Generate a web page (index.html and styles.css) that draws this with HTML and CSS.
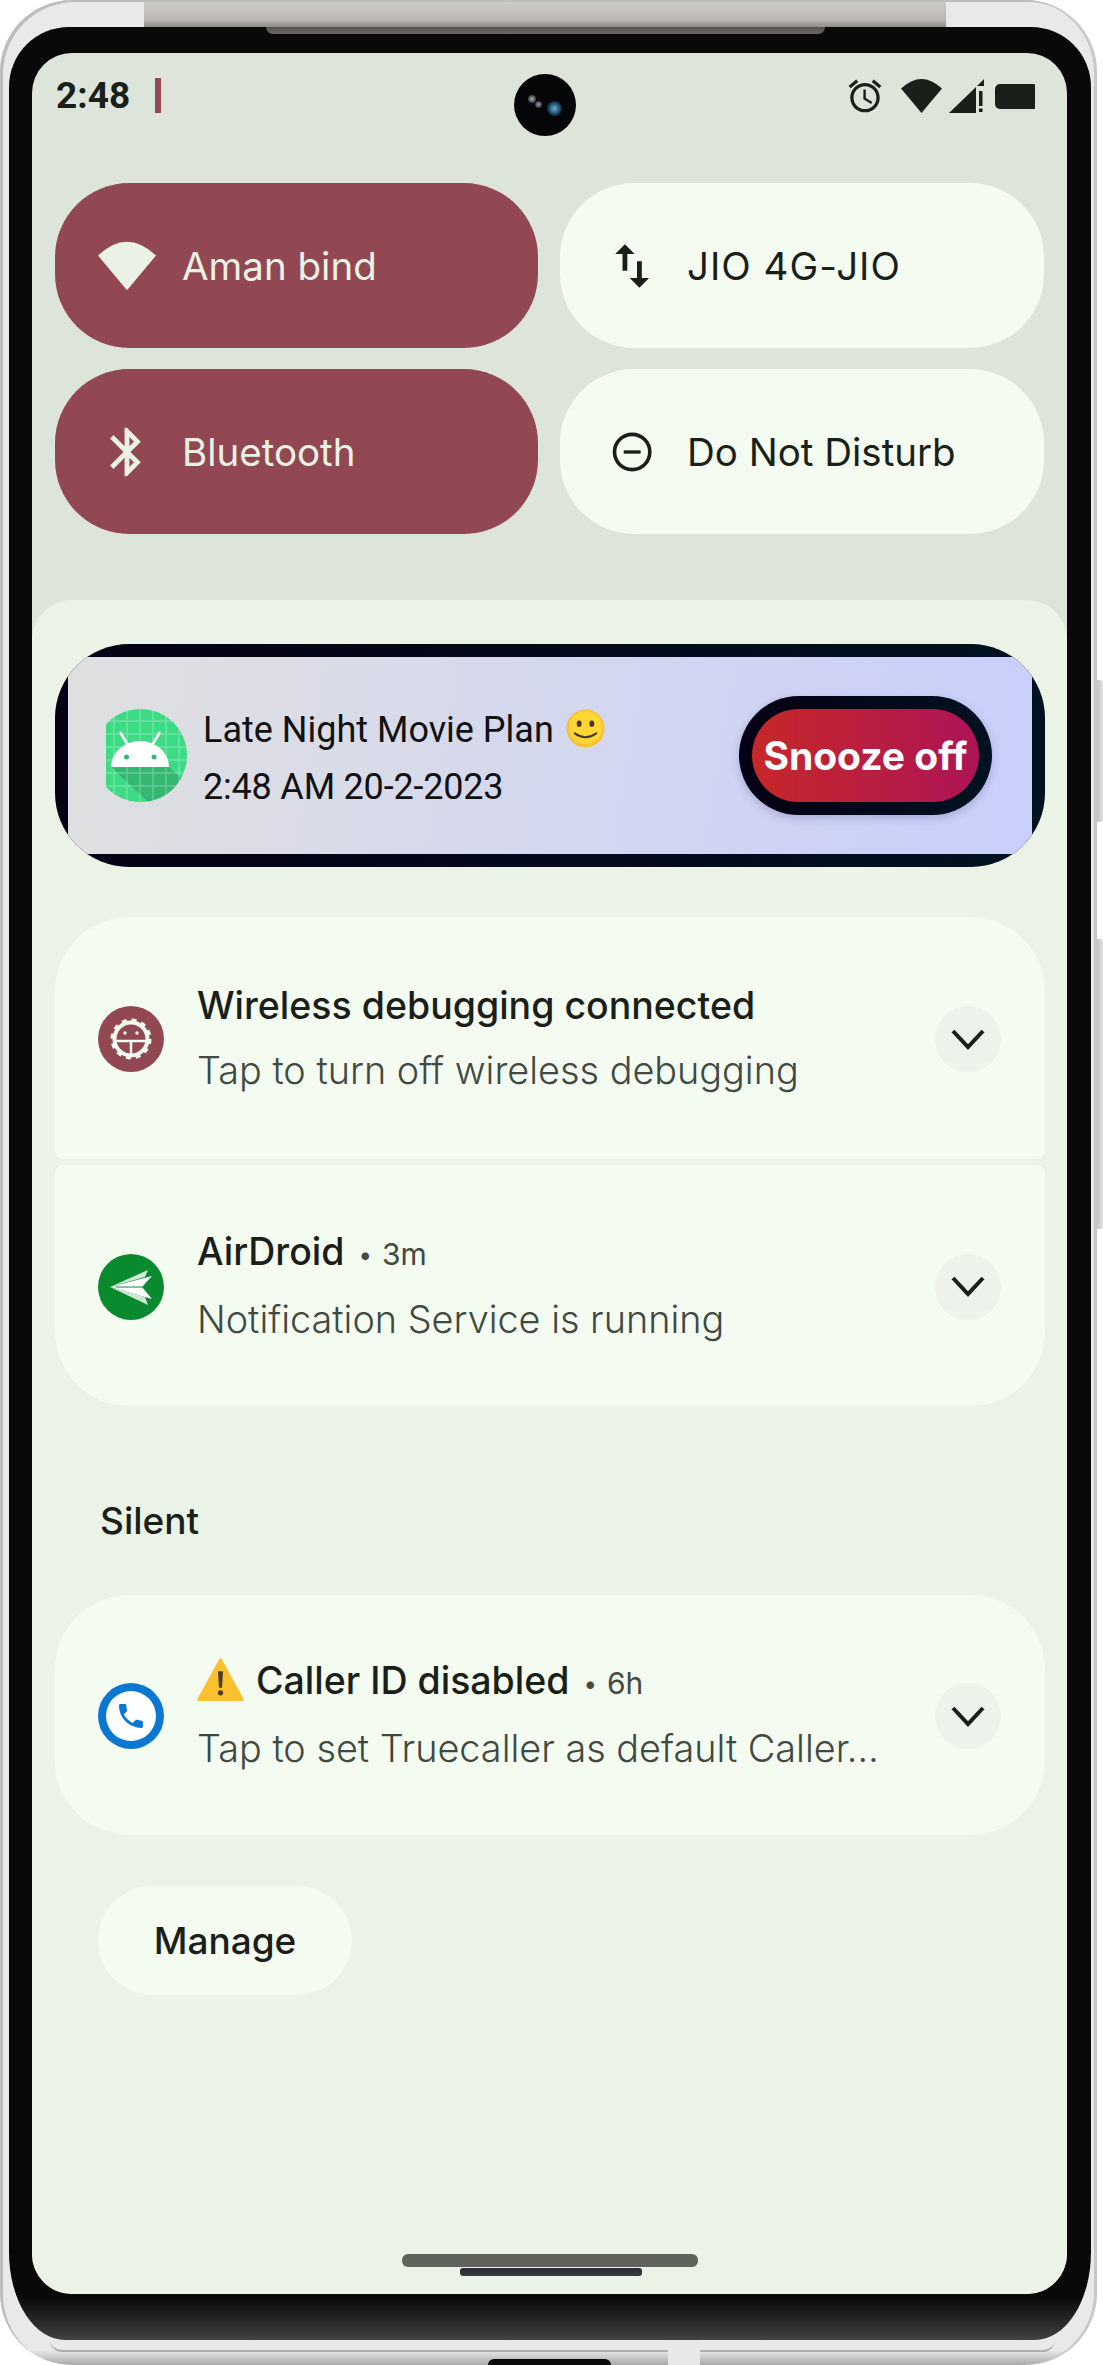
FILE: index.html
```html
<!DOCTYPE html>
<html lang="en">
<head>
  <meta charset="UTF-8" />
  <meta name="viewport" content="width=device-width, initial-scale=1.0"/>
  <title>Notification shade</title>
  <link rel="stylesheet" href="styles.css">
</head>
<body>

  <div class="phone">
    <!-- frame parts that sit over the body -->
    <div class="top-bar"></div>
    <div class="top-strip"></div>
    <div class="side-btn side-btn-power"></div>
    <div class="side-btn side-btn-volume"></div>
    <div class="bottom-line"></div>
    <div class="bottom-seam"></div>
    <div class="bottom-port"></div>

    <div class="bezel">
      <div class="screen">
        <div class="camera"><span class="lens-a"></span><span class="lens-b"></span><span class="lens-c"></span></div>

        <div class="status-bar">
          <div class="status-left">
            <span class="clock">2:48</span>
            <span class="status-mark"></span>
          </div>
          <div class="status-icons">
            <svg class="ic-alarm" viewBox="1 1 22 22"><path d="M22 5.72l-4.6-3.86-1.29 1.53 4.6 3.86L22 5.72zM7.88 3.39L6.6 1.86 2 5.71l1.29 1.53 4.59-3.85zM12.5 8H11v6l4.75 2.85.75-1.23-4-2.37V8zM12 4c-4.97 0-9 4.03-9 9s4.03 9 9 9 9-4.03 9-9-4.03-9-9-9zm0 16c-3.87 0-7-3.13-7-7s3.13-7 7-7 7 3.13 7 7-3.13 7-7 7z"/></svg>
            <svg class="ic-wifi" viewBox="0 0 41 34"><path d="M0 9.5Q20.500-9.500 41 9.500L20.500 34z"/></svg>
            <svg class="ic-signal" viewBox="0 0 35 34"><path d="M0 34L27 8V34zM28 7L35 0V7zM30 12H33.500V27H30zM30 29.500H33.500V33H30z"/></svg>
            <div class="battery"></div>
          </div>
        </div>

        <div class="tiles">
          <div class="tile tile-on">
            <svg class="tile-ic ic-tile-wifi" viewBox="0 0 55 46"><path d="M0 13Q27.500-13 55 13L27.500 46z"/></svg>
            <span>Aman bind</span>
          </div>
          <div class="tile">
            <svg class="tile-ic" viewBox="2 0 24 24"><path d="M16 17.010V10h-2v7.010h-3L15 21l4-3.990h-3zM9 3L5 6.990h3V14h2V6.990h3L9 3z"/></svg>
            <span class="tile-wide">JIO 4G-JIO</span>
          </div>
          <div class="tile tile-on">
            <svg class="tile-ic" viewBox="0 0 24 24"><path d="M17.710 7.710L12 2h-1v7.590L6.410 5 5 6.410 10.590 12 5 17.590 6.410 19 11 14.410V22h1l5.710-5.710-4.300-4.290 4.300-4.290zM13 5.830l1.880 1.880L13 9.590V5.830zm1.880 10.460L13 18.170v-3.760l1.880 1.880z"/></svg>
            <span>Bluetooth</span>
          </div>
          <div class="tile">
            <svg class="tile-ic" viewBox="0 0 24 24"><circle class="dnd-ring" cx="10" cy="12" r="7.300"/><rect x="6.500" y="11.300" width="7" height="1.400"/></svg>
            <span>Do Not Disturb</span>
          </div>
        </div>

        <div class="panel">
          <div class="alarm-card">
            <div class="alarm-inner">
              <svg class="alarm-app" viewBox="0 0 81 93">
                <defs>
                  <clipPath id="appClip"><circle cx="34.500" cy="46.500" r="46.500"/></clipPath>
                </defs>
                <g clip-path="url(#appClip)">
                  <rect width="81" height="93" fill="#3ddb85"/>
                  <path d="M5 58H63L81 74V93H42z" fill="#33b772"/>
                  <path class="app-grid" d="M8 0V93M21 0V93M34 0V93M47 0V93M60 0V93M73 0V93M0 12H81M0 25H81M0 38H81M0 51H81M0 64H81M0 77H81"/>
                  <path class="app-antenna" d="M14 23L23 38M54 23L45 38"/>
                  <path d="M5 58A29 26 0 0 1 63 58z" fill="#fff"/>
                  <circle cx="20.500" cy="48" r="2.500" fill="#33b772"/>
                  <circle cx="48" cy="48" r="2.500" fill="#33b772"/>
                </g>
              </svg>
              <div class="alarm-text">
                <div class="alarm-title">Late Night Movie Plan
                  <svg class="smiley" viewBox="0 0 40 40"><circle cx="20" cy="20" r="19.500" fill="#fbc02d"/><circle cx="20" cy="19" r="17" fill="#fdd835"/><ellipse cx="13.500" cy="15" rx="2.500" ry="3.300" fill="#4e342e"/><ellipse cx="26.500" cy="15" rx="2.500" ry="3.300" fill="#4e342e"/><path d="M9 25Q20 33 31 25" fill="none" stroke="#4e342e" stroke-width="2.200" stroke-linecap="round"/></svg>
                </div>
                <div class="alarm-time">2:48 AM 20-2-2023</div>
              </div>
              <div class="snooze"><div class="snooze-face">Snooze off</div></div>
            </div>
          </div>

          <div class="notif-group">
            <div class="notif notif-first">
              <svg class="notif-ic" viewBox="0 0 66 66">
                <circle cx="33" cy="33" r="33" fill="#924852"/>
                <circle class="gear-teeth" cx="33" cy="33" r="18.500"/>
                <circle class="gear-ring" cx="33" cy="33" r="16.500"/>
                <path class="gear-t" d="M17 35H49M33 35V50"/>
                <circle cx="27" cy="27" r="1.700" fill="#f3faf0"/>
                <circle cx="39" cy="27" r="1.700" fill="#f3faf0"/>
              </svg>
              <div class="notif-text">
                <div class="notif-title">Wireless debugging connected</div>
                <div class="notif-sub">Tap to turn off wireless debugging</div>
              </div>
              <div class="expand"><svg viewBox="0 0 34 21"><path d="M2 2L17 18L32 2"/></svg></div>
            </div>
            <div class="notif notif-last">
              <svg class="notif-ic" viewBox="0 0 66 66">
                <circle cx="33" cy="33" r="33" fill="#0a8a2e"/>
                <path d="M12 33L54 22L44 33L54 45z" fill="#fff"/>
                <path d="M12 33L50 16L47 23z" fill="#cfe9d4"/>
                <path d="M12 33L50 51L47 43z" fill="#cfe9d4"/>
                <path d="M18 33H44" stroke="#0a8a2e" stroke-width="1"/>
              </svg>
              <div class="notif-text">
                <div class="notif-title">AirDroid<span class="notif-dot">•</span><span class="notif-age">3m</span></div>
                <div class="notif-sub">Notification Service is running</div>
              </div>
              <div class="expand"><svg viewBox="0 0 34 21"><path d="M2 2L17 18L32 2"/></svg></div>
            </div>
          </div>

          <div class="section-label">Silent</div>

          <div class="notif notif-single">
            <svg class="notif-ic" viewBox="0 0 66 66">
              <circle cx="33" cy="33" r="33" fill="#0a77d2"/>
              <circle cx="33" cy="33" r="25" fill="#fff"/>
              <g transform="translate(17 17) scale(1.330)"><path fill="#0a77d2" d="M6.620 10.790c1.440 2.830 3.760 5.140 6.590 6.590l2.200-2.200c.27-.27.67-.36 1.020-.24 1.120.37 2.330.57 3.570.57.55 0 1 .45 1 1V20c0 .55-.45 1-1 1-9.390 0-17-7.610-17-17 0-.55.45-1 1-1h3.500c.55 0 1 .45 1 1 0 1.250.2 2.450.57 3.570.11.35.03.74-.25 1.020l-2.200 2.200z"/></g>
            </svg>
            <div class="notif-text">
              <div class="notif-title">
                <svg class="warn" viewBox="0 0 46 44"><path d="M23 2L45 42H1z" fill="#fbc02d" stroke="#fbc02d" stroke-width="2" stroke-linejoin="round"/><path d="M20.500 14H25.500L24.500 30H21.500z" fill="#4e3b2a"/><circle cx="23" cy="35" r="2.600" fill="#4e3b2a"/></svg>
                Caller ID disabled<span class="notif-dot">•</span><span class="notif-age">6h</span>
              </div>
              <div class="notif-sub">Tap to set Truecaller as default Caller…</div>
            </div>
            <div class="expand"><svg viewBox="0 0 34 21"><path d="M2 2L17 18L32 2"/></svg></div>
          </div>

          <div class="manage">Manage</div>

          <div class="nav-pill"></div>
          <div class="nav-pill-under"></div>
        </div>
      </div>
    </div>
  </div>

</body>
</html>
```

FILE: styles.css
```css
body {
  margin: 0;
  background: #fff;
  font-family: Inter, Roboto, sans-serif;
}
.phone {
  position: relative;
  box-sizing: border-box;
  width: 1097px;
  height: 2365px;
  padding: 27px 6px 25px 9px;
  border-radius: 72px;
  background: linear-gradient(to bottom, #e9e9e9 0, #e9e9e9 2350px, #a9a9a9 2365px);
  box-shadow: inset 3px 2px 0 #bdbdbd, inset -3px 0 0 #c8c8c8;
}
.top-bar {
  position: absolute;
  left: 144px;
  top: 2px;
  width: 802px;
  height: 25px;
  background: linear-gradient(to bottom, #cdc9c6, #bdb8b5 70%, #8f8b87);
}
.top-strip {
  position: absolute;
  left: 266px;
  top: 27px;
  width: 559px;
  height: 7px;
  background: linear-gradient(to bottom, #55524d, #6c6963);
  border-radius: 0 0 8px 8px;
  z-index: 2;
}
.side-btn {
  position: absolute;
  left: 1097px;
  width: 6px;
  background: linear-gradient(to right, #c4c4c4, #e2e2e2);
  border-radius: 0 3px 3px 0;
}
.side-btn-power { top: 680px; height: 142px; }
.side-btn-volume { top: 939px; height: 290px; }
.bottom-line {
  position: absolute;
  left: 50px;
  top: 2340px;
  width: 1005px;
  height: 10px;
  border: 1px solid #adadad;
  border-width: 0 0 2px;
  border-radius: 0 0 20px 20px;
}
.bottom-seam {
  position: absolute;
  left: 668px;
  top: 2340px;
  width: 32px;
  height: 25px;
  background: #e8e8e8;
}
.bottom-port {
  position: absolute;
  left: 488px;
  top: 2359px;
  width: 123px;
  height: 6px;
  background: #0a0a0a;
  border-radius: 8px 8px 0 0;
}
.bezel {
  position: relative;
  box-sizing: border-box;
  height: 2313px;
  padding: 26px 24px 46px 23px;
  background: linear-gradient(to bottom, #090909 0, #090909 2270px, #414141 2313px);
  border-radius: 60px 60px 56px 56px / 60px 60px 88px 88px;
}
.screen {
  position: relative;
  display: flex;
  flex-direction: column;
  height: 2241px;
  background: #dde5da;
  border-radius: 40px;
  overflow: hidden;
}
.camera {
  position: absolute;
  left: 482px;
  top: 21px;
  width: 62px;
  height: 62px;
  background: #050608;
  border-radius: 50%;
}
.camera span {
  position: absolute;
  border-radius: 50%;
}
.lens-a { left: 14px; top: 21px; width: 8px; height: 8px; background: radial-gradient(circle, #a9b3ad, #050608); }
.lens-b { left: 21px; top: 27px; width: 7px; height: 7px; background: radial-gradient(circle, #ab9aad, #050608); }
.lens-c { left: 33px; top: 27px; width: 15px; height: 15px; background: radial-gradient(circle, #6ab4dc, #123a55 60%, #050608); }

.status-bar {
  display: flex;
  justify-content: space-between;
  align-items: flex-start;
  height: 130px;
  box-sizing: border-box;
  padding: 25px 32px 0 24px;
}
.status-left {
  display: flex;
  align-items: center;
  gap: 25px;
}
.clock {
  font-family: Roboto, sans-serif;
  font-size: 37px;
  line-height: 34px;
  font-weight: 700;
  color: #1a1f1a;
}
.status-mark {
  width: 6px;
  height: 35px;
  background: #924852;
}
.status-icons {
  display: flex;
  align-items: center;
  gap: 7px;
  fill: #1a1f1a;
}
.ic-alarm { width: 36px; height: 36px; margin-right: 11px; }
.ic-wifi { width: 41px; height: 34px; }
.ic-signal { width: 35px; height: 34px; margin-right: 4px; }
.battery {
  width: 40px;
  height: 25px;
  background: #1a1f1a;
  border-radius: 5px 1px 1px 5px;
}

.tiles {
  display: grid;
  grid-template-columns: 483px 484px;
  grid-auto-rows: 165px;
  gap: 21px 22px;
  padding: 0 23px;
}
.tile {
  display: flex;
  align-items: center;
  background: #f4fbf1;
  color: #1a1f1a;
  fill: #1a1f1a;
  border-radius: 74px;
  font-size: 38.500px;
  padding-left: 48px;
}
.tile-on {
  background: #924852;
  color: #eaf2e6;
  fill: #eaf2e6;
  padding-left: 43px;
}
.tile-wide {
  letter-spacing: 1px;
}
.tile-ic {
  width: 58px;
  height: 58px;
  margin-right: 21px;
  flex: none;
}
.tile-on .tile-ic {
  margin-right: 26px;
}
.dnd-ring {
  fill: none;
  stroke: #1a1f1a;
  stroke-width: 1.500;
}

.panel {
  flex: 1;
  display: flex;
  flex-direction: column;
  margin-top: 66px;
  padding: 44px 22px 18px 23px;
  background: #eaf3e6;
  border-radius: 40px 40px 0 0;
}

.alarm-card {
  height: 223px;
  box-sizing: border-box;
  padding: 13px 13px;
  background: linear-gradient(to right, #050014, #001220);
  border-radius: 74px;
  overflow: hidden;
}
.alarm-inner {
  display: flex;
  align-items: center;
  height: 100%;
  padding: 0 40px 0 38px;
  background: linear-gradient(100deg, #e0e0e0, #c8cffb);
}
.alarm-app {
  width: 81px;
  height: 93px;
  flex: none;
  margin-right: 16px;
}
.app-grid {
  fill: none;
  stroke: #fff;
  stroke-opacity: .25;
  stroke-width: 1.500;
}
.app-antenna {
  fill: none;
  stroke: #fff;
  stroke-width: 2.500;
}
.alarm-text {
  flex: 1;
  padding-top: 7px;
  font-family: Roboto, sans-serif;
  font-size: 36px;
  line-height: 57px;
  color: #111;
}
.alarm-time {
  letter-spacing: -0.2px;
}
.smiley {
  width: 39px;
  height: 39px;
  margin-left: 3px;
  vertical-align: -6px;
}
.snooze {
  box-sizing: border-box;
  width: 253px;
  height: 119px;
  padding: 13px;
  background: linear-gradient(to right, #050014, #001220);
  border-radius: 60px;
  box-shadow: 0 3px 8px rgba(60,60,120,0.25);
}
.snooze-face {
  display: flex;
  align-items: center;
  justify-content: center;
  height: 100%;
  background: linear-gradient(to right, #c62828, #ad1457);
  border-radius: 47px;
  color: #fff;
  font-size: 39px;
  font-weight: 700;
}

.notif-group {
  display: flex;
  flex-direction: column;
  gap: 6px;
  margin-top: 50px;
}
.notif {
  display: flex;
  align-items: center;
  box-sizing: border-box;
  height: 241px;
  padding: 2px 44px 0 43px;
  background: #f4fbf1;
}
.notif-first { border-radius: 74px 74px 8px 8px; height: 242px; }
.notif-last { border-radius: 8px 8px 74px 74px; }
.notif-single { border-radius: 74px; height: 240px; }
.notif-ic {
  width: 66px;
  height: 66px;
  flex: none;
  margin-right: 33px;
}
.gear-ring {
  fill: none;
  stroke: #f3faf0;
  stroke-width: 4;
}
.gear-teeth {
  fill: none;
  stroke: #f3faf0;
  stroke-width: 4;
  stroke-dasharray: 4.800 4.890;
}
.gear-t {
  fill: none;
  stroke: #f3faf0;
  stroke-width: 2.500;
}
.notif-text {
  flex: 1;
  min-width: 0;
  margin-top: -3px;
  line-height: 67px;
}
.notif-title {
  font-size: 37.500px;
  font-weight: 500;
  color: #1a1f1a;
}
.notif-sub {
  margin-top: -2px;
  font-size: 37.800px;
  font-weight: 300;
  color: #3f4941;
}
.notif-dot {
  margin: 0 10px 0 14px;
  font-size: 24px;
  font-weight: 400;
  color: #424a42;
  vertical-align: 2px;
}
.notif-age {
  font-size: 30px;
  font-weight: 400;
  color: #424a42;
}
.warn {
  width: 47px;
  height: 45px;
  vertical-align: -8px;
  margin-right: 2px;
}
.expand {
  display: flex;
  align-items: center;
  justify-content: center;
  width: 66px;
  height: 66px;
  flex: none;
  background: #edf2ea;
  border-radius: 50%;
}
.expand svg {
  width: 34px;
  height: 21px;
  fill: none;
  stroke: #1a1f1a;
  stroke-width: 4;
}

.section-label {
  height: 189px;
  box-sizing: border-box;
  padding: 91px 0 0 45px;
  font-size: 37px;
  line-height: 48px;
  font-weight: 500;
  color: #1a1f1a;
}
.manage {
  display: flex;
  align-items: center;
  justify-content: center;
  width: 254px;
  height: 109px;
  margin: 51px 0 0 43px;
  background: #f4fbf1;
  border-radius: 55px;
  font-size: 37px;
  font-weight: 500;
  color: #1a1f1a;
}
.nav-pill {
  width: 296px;
  height: 13px;
  margin: auto 0 1px 347px;
  background: #60635b;
  border-radius: 6px;
}
.nav-pill-under {
  width: 182px;
  height: 8px;
  margin-left: 405px;
  background: linear-gradient(to bottom, #2a2b30, #3a3b40);
  border-radius: 3px;
}
```
